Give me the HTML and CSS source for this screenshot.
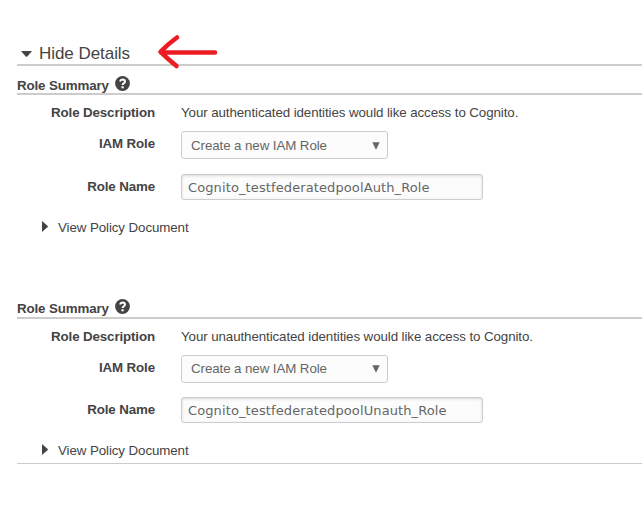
FILE: index.html
```html
<!DOCTYPE html>
<html lang="en">
<head>
<meta charset="utf-8">
<title>Role Summary</title>
<link rel="stylesheet" href="styles.css">
</head>
<body>
<main class="page">
  <header class="details">
    <svg class="caret-down" width="11" height="6" viewBox="0 0 11 6"><path d="M0 0H11L6.500 5.300Q5.500 6.300 4.500 5.300Z"/></svg>
    <span class="details-title">Hide Details</span>
    <svg class="arrow" width="62" height="36" viewBox="0 0 62 36"><path d="M59 18.500H5M21 3.500Q12 10 4.500 17.800Q12 25 20.500 32"/></svg>
  </header>

  <section class="role">
    <h2 class="summary"><span class="summary-text">Role Summary</span>
      <svg class="help" width="15" height="15" viewBox="0 0 15 15"><circle cx="7.500" cy="7.500" r="7.400"/><path d="M5 5.500Q5.500 3.600 7.500 3.600Q10 3.700 10 5.500Q10 6.600 8.700 7.300Q7.600 7.900 7.600 9"/><rect x="6.500" y="10.200" width="2.200" height="2.100"/></svg>
    </h2>
    <div class="row row-desc"><span class="label">Role Description</span><span class="desc">Your authenticated identities would like access to Cognito.</span></div>
    <div class="row row-select"><span class="label label-field">IAM Role</span><div class="select"><span>Create a new IAM Role</span><svg width="8" height="8" viewBox="0 0 8 8"><path d="M0.300 0.300H7.700L4 7.700Z"/></svg></div></div>
    <div class="row row-name"><span class="label label-field">Role Name</span><div class="input">Cognito_testfederatedpoolAuth_Role</div></div>
    <div class="policy"><svg width="6" height="11" viewBox="0 0 6 11"><path d="M0 0L5.700 5Q6.200 5.500 5.700 6L0 11Z"/></svg><span class="policy-text">View Policy Document</span></div>
  </section>

  <section class="role role-unauth">
    <h2 class="summary"><span class="summary-text">Role Summary</span>
      <svg class="help" width="15" height="15" viewBox="0 0 15 15"><circle cx="7.500" cy="7.500" r="7.400"/><path d="M5 5.500Q5.500 3.600 7.500 3.600Q10 3.700 10 5.500Q10 6.600 8.700 7.300Q7.600 7.900 7.600 9"/><rect x="6.500" y="10.200" width="2.200" height="2.100"/></svg>
    </h2>
    <div class="row row-desc"><span class="label">Role Description</span><span class="desc">Your unauthenticated identities would like access to Cognito.</span></div>
    <div class="row row-select"><span class="label label-field">IAM Role</span><div class="select"><span>Create a new IAM Role</span><svg width="8" height="8" viewBox="0 0 8 8"><path d="M0.300 0.300H7.700L4 7.700Z"/></svg></div></div>
    <div class="row row-name"><span class="label label-field">Role Name</span><div class="input">Cognito_testfederatedpoolUnauth_Role</div></div>
    <div class="policy"><svg width="6" height="11" viewBox="0 0 6 11"><path d="M0 0L5.700 5Q6.200 5.500 5.700 6L0 11Z"/></svg><span class="policy-text">View Policy Document</span></div>
  </section>
</main>
</body>
</html>
```
FILE: styles.css
```css
* { box-sizing: border-box; }
body {
  margin: 0;
  background: #fff;
  color: #444;
  font: 13.33px/16px "Liberation Sans", Arial, sans-serif;
  letter-spacing: -0.09px;
  overflow: hidden;
}
svg { display: block; flex: none; }
.page { padding: 34px 0 0 17px; }
.details {
  display: flex;
  align-items: flex-start;
  height: 32px;
  padding-left: 4px;
  border-bottom: 2px solid #ccc;
  white-space: nowrap;
}
.caret-down { fill: #444; margin-top: 17px; }
.details-title { width: 92px; margin: 10px 0 0 7px; font-size: 17px; line-height: 20px; letter-spacing: -0.05px; }
.arrow {
  margin: 0 0 -6px 25px;
  fill: none;
  stroke: #ed1c24;
  stroke-width: 4.6;
  stroke-linecap: round;
  stroke-linejoin: round;
}
.summary {
  display: flex;
  height: 29px;
  margin: 0;
  padding-top: 10px;
  border-bottom: 2px solid #ccc;
  font-size: 13.33px;
  line-height: 18px;
}
.summary-text { width: 98px; padding-top: 1px; letter-spacing: -0.12px; white-space: nowrap; }
.help circle { fill: #444; }
.help path { fill: none; stroke: #fff; stroke-width: 2; }
.help rect { fill: #fff; }
.row { display: flex; white-space: nowrap; }
.label { width: 138px; margin-right: 26px; text-align: right; font-weight: bold; letter-spacing: -0.12px; }
.row-desc { height: 36px; padding-top: 10px; }
.row-select { height: 43px; }
.label-field { padding-top: 5px; }
.select {
  display: flex;
  justify-content: space-between;
  align-items: center;
  width: 207px;
  height: 28px;
  padding: 1px 7px 0 9px;
  border: 1px solid #ccc;
  border-radius: 3px;
  background: #fcfcfc;
  color: #666;
}
.select svg { fill: #666; }
.row-name { height: 26px; }
.input {
  width: 302px;
  height: 26px;
  padding: 5px 6px 0;
  border: 1px solid #ccc;
  border-radius: 3px;
  background: #fcfcfc;
  box-shadow: inset 0 1px 3px rgba(0, 0, 0, 0.14);
  color: #666;
  font-family: "DejaVu Sans", Verdana, sans-serif;
  font-size: 13px;
  letter-spacing: 0.11px;
}
.policy { display: flex; height: 16px; margin: 20px 0 0 25px; white-space: nowrap; }
.policy svg { fill: #444; margin-top: 1px; }
.policy-text { margin-left: 10px; }
.role-unauth { margin-top: 54px; border-bottom: 1px solid #ccc; height: 174px; }
.role-unauth .summary { padding-top: 9px; }
.role-unauth .row-select { height: 42px; }
.role-unauth .select { padding-top: 0; }
```
